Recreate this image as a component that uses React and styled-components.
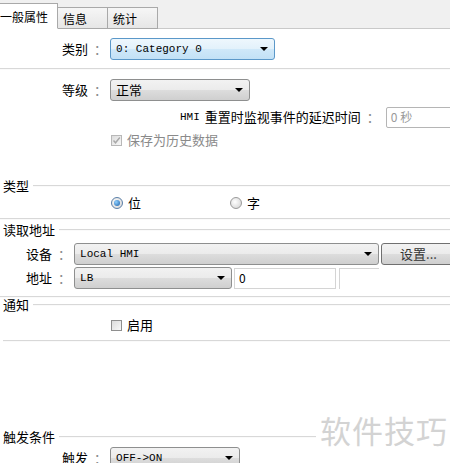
import styled, { createGlobalStyle, css } from "styled-components";

const GlobalStyle = createGlobalStyle`
  html, body {
    margin: 0;
    padding: 0;
    background: #fff;
    overflow: hidden;
  }
  body {
    font-family: "Noto Sans CJK SC", "Noto Sans", sans-serif;
    font-size: 13px;
    color: #000;
  }
`;

const Page = styled.div`
  position: relative;
  width: 450px;
  height: 463px;
  overflow: hidden;
  background: #fff;
`;

const TabBar = styled.div`
  display: flex;
  align-items: flex-end;
  height: 28px;
  background: #f0f0f0;
  border-bottom: 1px solid #c9c9c9;
`;

const Tab = styled.div`
  height: 22px;
  line-height: 22px;
  padding: 0 5px;
  font-size: 12px;
  margin-bottom: -1px;
  border: 1px solid #a9a9a9;
  border-left: none;
  background: linear-gradient(#f6f6f6, #e6e6e6);
  width: ${(p) => p.$width}px;
  box-sizing: border-box;
  ${(p) =>
    p.$active &&
    css`
      height: 26px;
      line-height: 26px;
      background: #fff;
      border-bottom: 1px solid #fff;
      padding: 0;
    `}
`;

const FieldRow = styled.div`
  display: flex;
  align-items: center;
  height: ${(p) => p.$h || 22}px;
  line-height: 16px;
  margin-top: ${(p) => p.$mt || 0}px;
  padding-left: ${(p) => p.$indent || 0}px;
`;

const Label = styled.span`
  display: flex;
  align-items: center;
  white-space: nowrap;
  margin-right: ${(p) => p.$gap || 3}px;
`;

const Colon = styled.span`
  color: #8a8a8a;
  margin-left: 6px;
`;

const Mono = styled.span`
  font-family: "Liberation Mono", monospace;
  font-size: 11px;
  margin-right: 5px;
`;

const Select = styled.div`
  position: relative;
  display: flex;
  align-items: center;
  width: ${(p) => p.$w}px;
  height: 22px;
  box-sizing: border-box;
  padding: 0 18px 0 5px;
  border: 1px solid #8e8f8f;
  border-radius: 3px;
  background: linear-gradient(#f2f2f2 0%, #ebebeb 50%, #dddddd 51%, #cfcfcf 100%);
  font-family: ${(p) => (p.$mono ? '"Liberation Mono", monospace' : "inherit")};
  font-size: ${(p) => (p.$mono ? "11px" : "13px")};
  flex-shrink: 0;
  ${(p) =>
    p.$focus &&
    css`
      border-color: #5b98c9;
      background: linear-gradient(#eef7fd 0%, #e2f1fb 50%, #cfe8f9 51%, #c2e1f6 100%);
    `}
  &::after {
    content: "";
    position: absolute;
    right: 6px;
    top: 8px;
    border-left: 4px solid transparent;
    border-right: 4px solid transparent;
    border-top: 4px solid #000;
  }
`;

const TextBox = styled.div`
  display: flex;
  align-items: center;
  width: ${(p) => p.$w}px;
  height: ${(p) => p.$h || 21}px;
  box-sizing: border-box;
  padding-left: 4px;
  border: 1px solid ${(p) => (p.$disabled ? "#b5b5b5" : "#d4d4d4")};
  border-radius: ${(p) => (p.$disabled ? "2px" : "0")};
  color: ${(p) => (p.$disabled ? "#9a9a9a" : "#000")};
  font-size: 12px;
  background: #fff;
  flex-shrink: 0;
  ${(p) =>
    p.$open &&
    css`
      border-right: none;
      border-bottom: none;
    `}
`;

const Button = styled.div`
  display: flex;
  align-items: center;
  justify-content: center;
  width: ${(p) => p.$w}px;
  height: 22px;
  box-sizing: border-box;
  margin-left: 2px;
  border: 1px solid #707070;
  border-radius: 3px;
  background: linear-gradient(#f2f2f2 0%, #ebebeb 50%, #dddddd 51%, #cfcfcf 100%);
  flex-shrink: 0;
  font-size: 13px;
  color: #333;
`;

const Rule = styled.div`
  height: 0;
  border-top: 1px solid #d8d8d8;
  border-bottom: 1px solid #fafafa;
  margin-top: ${(p) => p.$mt || 0}px;
  margin-left: ${(p) => p.$ml || 0}px;
`;

const SectionHead = styled.div`
  display: flex;
  align-items: center;
  height: 16px;
  line-height: 16px;
  margin-top: ${(p) => p.$mt || 0}px;
  padding-left: 3px;
  &::after {
    content: "";
    flex: 1;
    margin-left: 4px;
    border-top: 1px solid #d8d8d8;
    border-bottom: 1px solid #fafafa;
  }
`;

const Option = styled.label`
  display: flex;
  align-items: center;
  gap: 5px;
  width: ${(p) => p.$w || "auto"};
  color: ${(p) => (p.$disabled ? "#8a8a8a" : "#000")};
`;

const Box = styled.span`
  width: 11px;
  height: 11px;
  box-sizing: border-box;
  border: 1px solid ${(p) => (p.$disabled ? "#b8b8b8" : "#8f8f8f")};
  background: linear-gradient(135deg, #dcdcdc, #f8f8f8);
  display: flex;
  align-items: center;
  justify-content: center;
`;

const Radio = styled.span`
  width: 12px;
  height: 12px;
  box-sizing: border-box;
  border-radius: 50%;
  border: 1px solid #9a9a9a;
  background: radial-gradient(circle at 40% 40%, #ffffff, #cfcfcf);
  display: flex;
  align-items: center;
  justify-content: center;
  ${(p) =>
    p.$checked &&
    css`
      border-color: #5a7fa8;
      &::after {
        content: "";
        width: 6px;
        height: 6px;
        border-radius: 50%;
        background: radial-gradient(circle at 35% 35%, #8fd0ff, #1a5fa8);
      }
    `}
`;

const Watermark = styled.div`
  position: absolute;
  left: 316px;
  top: 411px;
  padding: 0 12px 0 4px;
  white-space: nowrap;
  background: #fff;
  color: #d3d3d3;
  font-size: 31px;
  letter-spacing: 1px;
  line-height: 38px;
`;

function Check() {
  return (
    <svg width="9" height="9" viewBox="0 0 9 9">
      <path d="M1.5 4.5 L3.5 6.8 L7.8 1.5" fill="none" stroke="#a8a8a8" strokeWidth="1.4" />
    </svg>
  );
}

export default function App() {
  return (
    <>
      <GlobalStyle />
      <Page>
        <TabBar>
          <Tab $active $width={58}>一般属性</Tab>
          <Tab $width={50}>信息</Tab>
          <Tab $width={50}>统计</Tab>
        </TabBar>

        <FieldRow $mt={9} $indent={62}>
          <Label>
            类别<Colon>：</Colon>
          </Label>
          <Select $w={165} $mono $focus>
            0: Category 0
          </Select>
        </FieldRow>

        <Rule $mt={8} />

        <FieldRow $mt={9} $indent={62}>
          <Label>
            等级<Colon>：</Colon>
          </Label>
          <Select $w={140}>正常</Select>
        </FieldRow>

        <FieldRow $mt={5} $indent={180}>
          <Label $gap={6}>
            <Mono>HMI</Mono>
            重置时监视事件的延迟时间<Colon>：</Colon>
          </Label>
          <TextBox $w={80} $disabled>
            0 秒
          </TextBox>
        </FieldRow>

        <FieldRow $mt={1} $indent={111}>
          <Option $disabled>
            <Box $disabled>
              <Check />
            </Box>
            保存为历史数据
          </Option>
        </FieldRow>

        <SectionHead $mt={27}>类型</SectionHead>

        <FieldRow $h={18} $indent={111}>
          <Option $w="119px">
            <Radio $checked />位
          </Option>
          <Option>
            <Radio />字
          </Option>
        </FieldRow>

        <Rule $mt={6} />

        <SectionHead $mt={2}>读取地址</SectionHead>

        <FieldRow $mt={5} $indent={26}>
          <Label>
            设备<Colon>：</Colon>
          </Label>
          <Select $w={305} $mono>
            Local HMI
          </Select>
          <Button $w={75}>设置...</Button>
        </FieldRow>

        <FieldRow $mt={2} $indent={26}>
          <Label>
            地址<Colon>：</Colon>
          </Label>
          <Select $w={158} $mono>
            LB
          </Select>
          <TextBox $w={102} style={{ marginLeft: 2 }}>
            0
          </TextBox>
          <TextBox $w={40} $open style={{ marginLeft: 3 }} />
        </FieldRow>

        <Rule $mt={7} />

        <SectionHead $mt={-1}>通知</SectionHead>

        <FieldRow $h={18} $mt={3} $indent={111}>
          <Option>
            <Box />
            启用
          </Option>
        </FieldRow>

        <Rule $mt={6} $ml={3} />

        <SectionHead $mt={87}>触发条件</SectionHead>

        <FieldRow $mt={2} $indent={62}>
          <Label>
            触发<Colon>：</Colon>
          </Label>
          <Select $w={130} $mono>
            OFF-&gt;ON
          </Select>
        </FieldRow>

        <Watermark>软件技巧</Watermark>
      </Page>
    </>
  );
}
